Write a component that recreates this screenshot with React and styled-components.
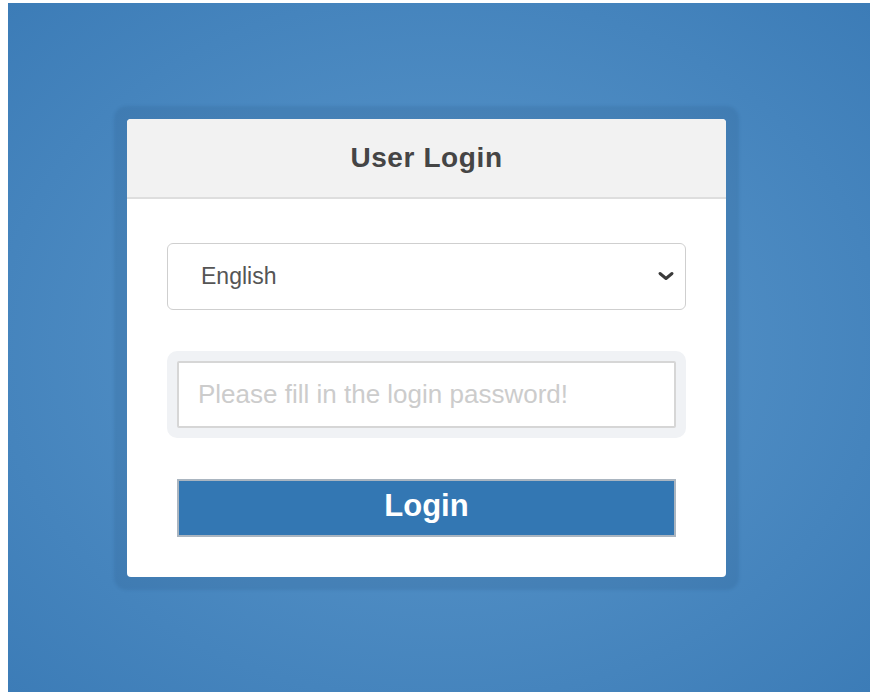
import styled, { createGlobalStyle } from 'styled-components';

const GlobalStyle = createGlobalStyle`
  html, body {
    margin: 0;
    padding: 0;
    background: #ffffff;
  }
  * {
    box-sizing: border-box;
  }
`;

export default function App() {
  return (
    <>
      <GlobalStyle />
      <Backdrop>
        <LoginCard>
          <CardHeader>
            <CardTitle>User Login</CardTitle>
          </CardHeader>
          <CardBody>
            <SelectBox>
              <span>English</span>
              <Chevron viewBox="0 0 20 12">
                <path d="M4 3.5 L10 8.5 L16 3.5" />
              </Chevron>
            </SelectBox>
            <InputHalo>
              <PasswordInput type="password" placeholder="Please fill in the login password!" />
            </InputHalo>
            <LoginButton>Login</LoginButton>
          </CardBody>
        </LoginCard>
      </Backdrop>
    </>
  );
}

const Backdrop = styled.div`
  margin: 3px 5px 0 8px;
  height: 689px;
  display: flex;
  align-items: center;
  justify-content: center;
  padding-right: 25px;
  background: radial-gradient(ellipse at 50% 50%, #5e99cb 0%, #4e8cc3 45%, #3c7cb7 100%);
  font-family: 'Liberation Sans', Arial, sans-serif;
`;

const LoginCard = styled.div`
  width: 599px;
  height: 458px;
  background: #ffffff;
  border-radius: 4px;
  overflow: hidden;
  box-shadow: 0 0 3px 13px rgba(35, 80, 125, 0.16);
  display: flex;
  flex-direction: column;
`;

const CardHeader = styled.div`
  height: 80px;
  background: #f2f2f2;
  border-bottom: 2px solid #dedede;
  display: flex;
  align-items: center;
  justify-content: center;
`;

const CardTitle = styled.h2`
  margin: 0;
  font-size: 28px;
  font-weight: 700;
  letter-spacing: 0.6px;
  color: #454545;
`;

const CardBody = styled.div`
  flex: 1;
  padding: 44px 40px 40px;
  display: flex;
  flex-direction: column;
  gap: 41px;
`;

const SelectBox = styled.div`
  height: 67px;
  border: 1px solid #cfcfcf;
  border-radius: 6px;
  display: flex;
  align-items: center;
  justify-content: space-between;
  padding: 0 9px 0 33px;
  font-size: 23px;
  color: #555555;
`;

const Chevron = styled.svg`
  width: 20px;
  height: 12px;
  fill: none;
  stroke: #3a3a3a;
  stroke-width: 3;
  stroke-linecap: round;
  stroke-linejoin: round;
`;

const InputHalo = styled.div`
  height: 87px;
  padding: 10px;
  background: #f0f2f5;
  border-radius: 10px;
  display: flex;
`;

const PasswordInput = styled.input`
  flex: 1;
  height: 67px;
  border: 2px solid #d6d6d6;
  border-radius: 2px;
  background: #ffffff;
  padding: 0 19px;
  font-family: 'Liberation Sans', Arial, sans-serif;
  font-size: 26px;
  color: #555555;
  outline: none;

  &::placeholder {
    color: #cccccc;
  }
`;

const LoginButton = styled.button`
  margin: 0 10px;
  height: 58px;
  border: 2px solid #aab5c0;
  background: #3377b3;
  color: #ffffff;
  font-family: 'Liberation Sans', Arial, sans-serif;
  font-size: 31px;
  font-weight: 700;
  padding: 0 0 4px;
  cursor: pointer;
`;
